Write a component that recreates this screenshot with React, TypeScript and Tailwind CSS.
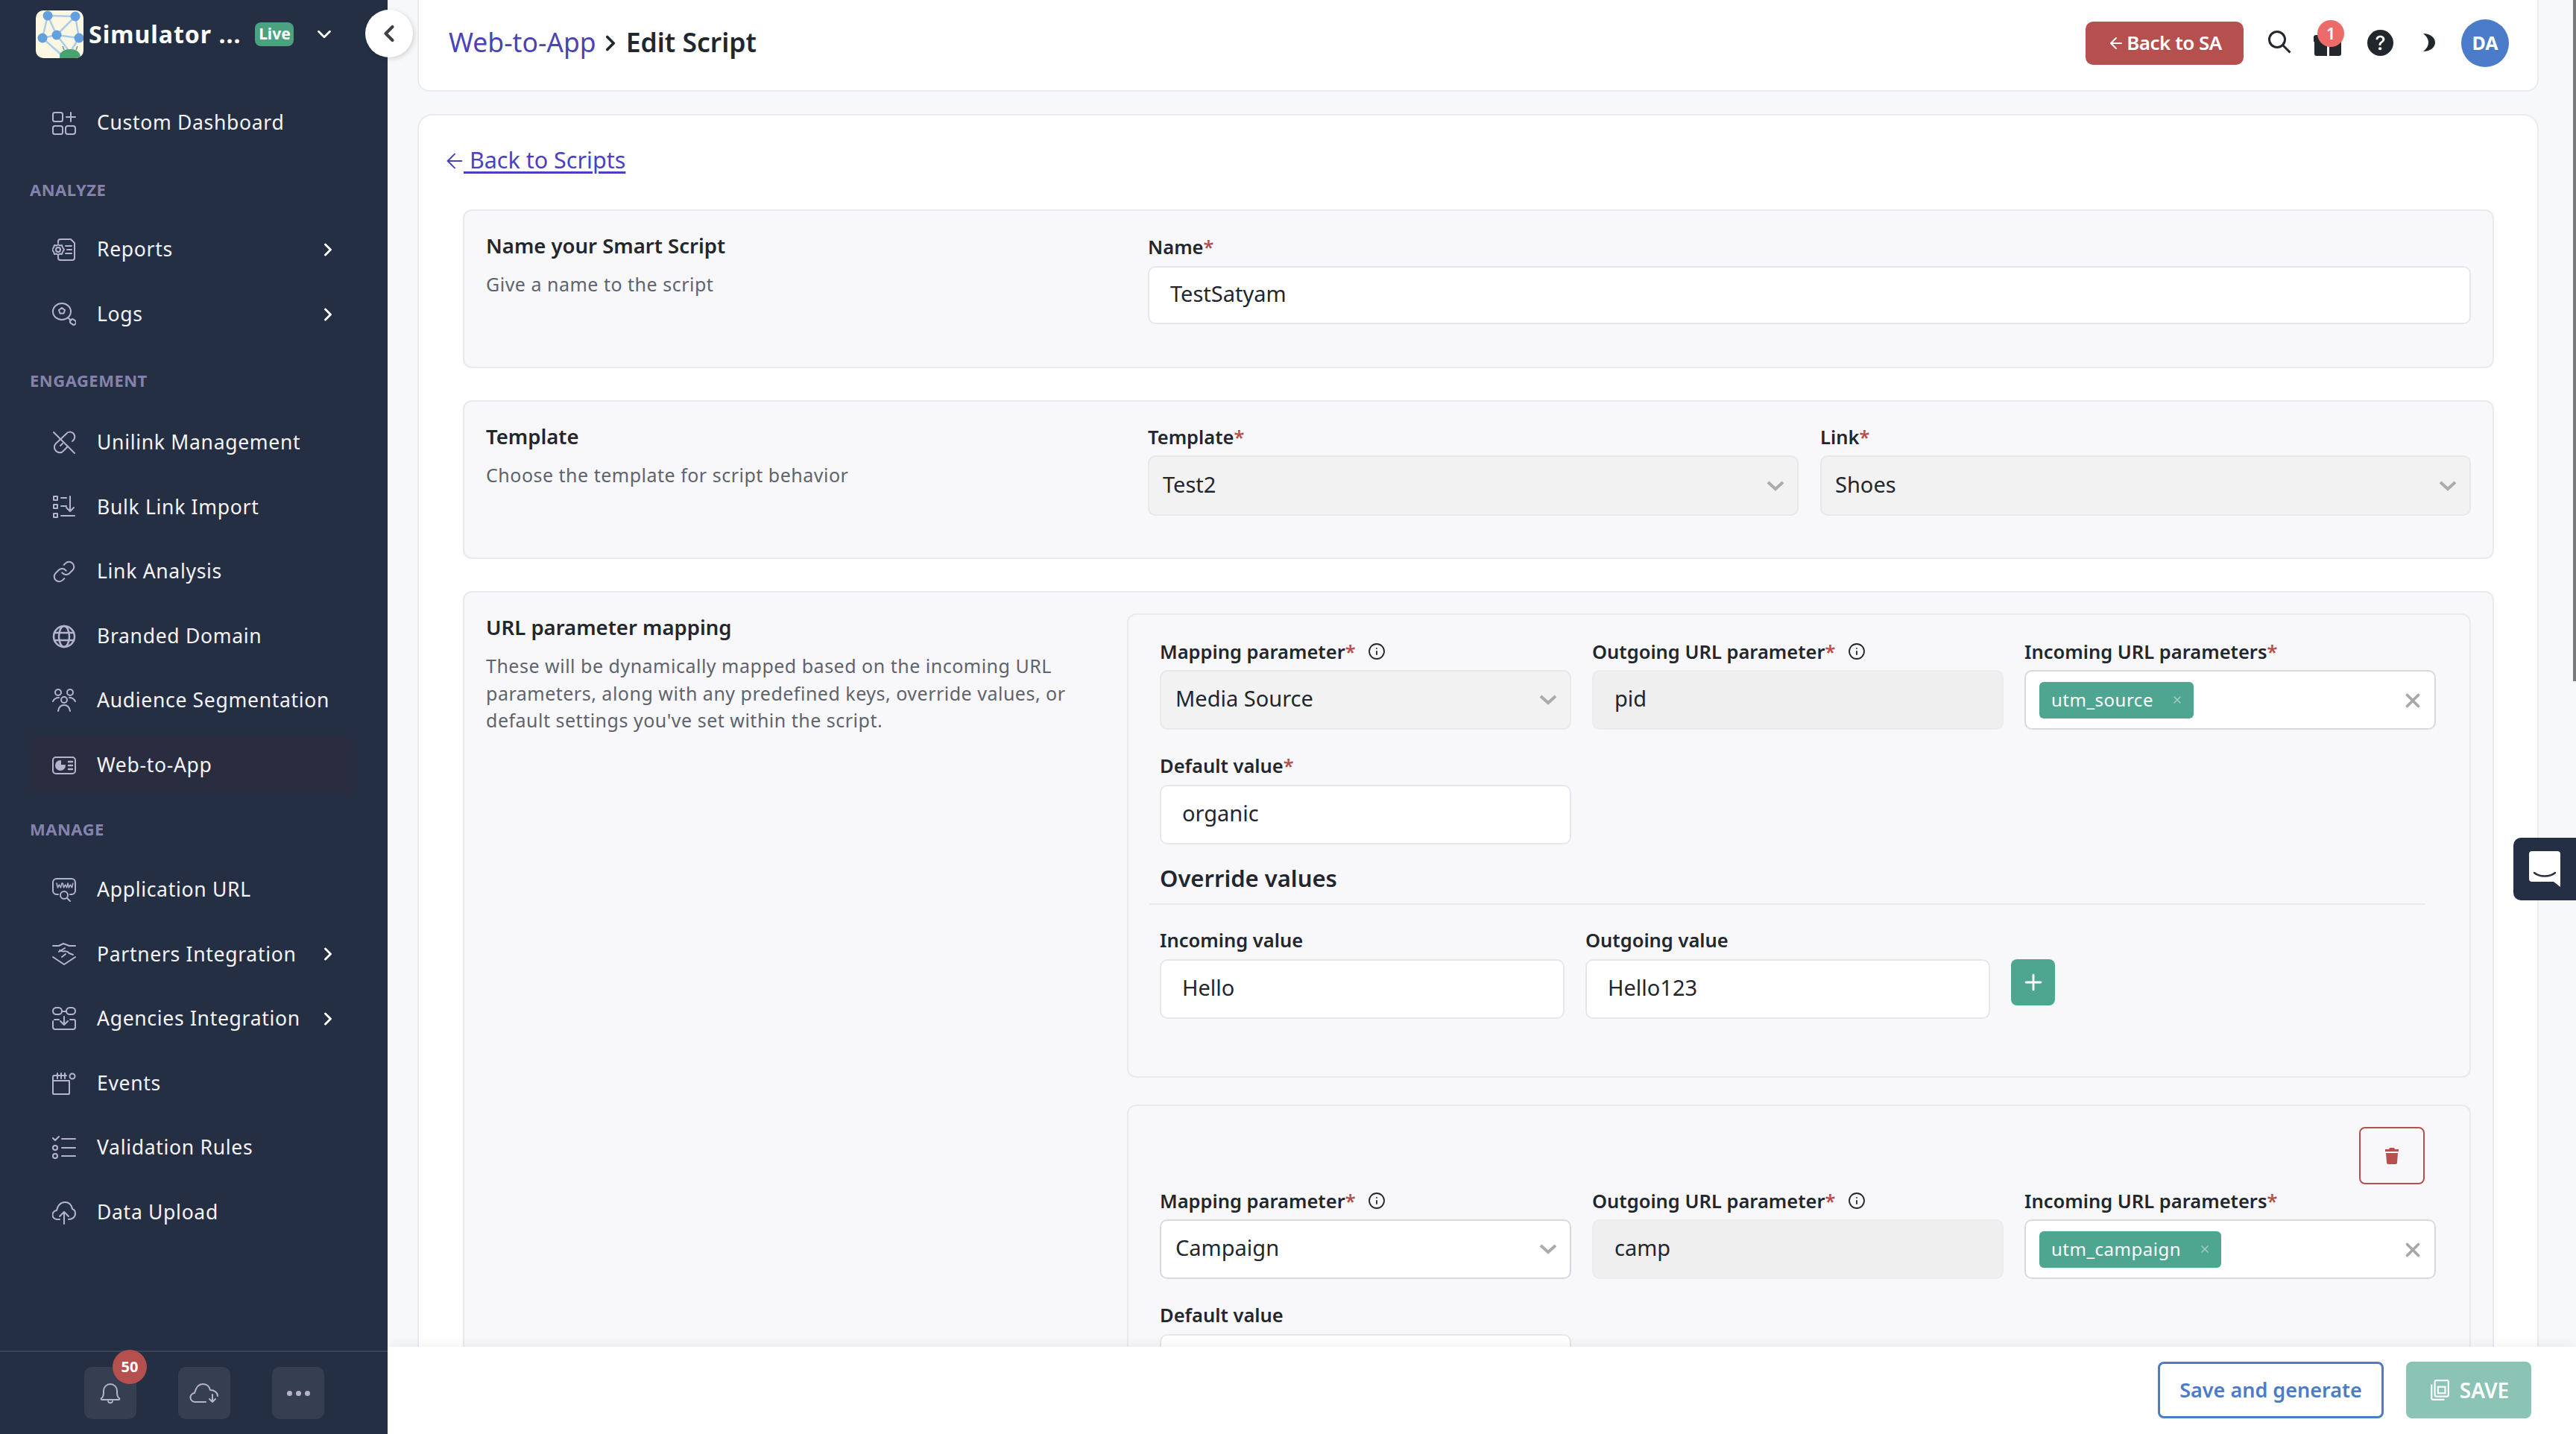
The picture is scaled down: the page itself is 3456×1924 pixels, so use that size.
import React from "react";
import { ChevronDown, ChevronRight, ChevronLeft, ArrowLeft, Info, X, Plus } from "lucide-react";
import { BsQuestionCircleFill } from "react-icons/bs";

const S = { fill: "none", stroke: "currentColor", strokeWidth: 2, strokeLinecap: "round", strokeLinejoin: "round" } as const;

const icons: Record<string, React.ReactNode> = {
  dash: <g {...S}><rect x="1" y="2" width="13" height="12" rx="2.5" /><path d="M19 8h12M25 2v12" /><rect x="1" y="20" width="13" height="11" rx="2.5" /><rect x="18" y="20" width="13" height="11" rx="3" /></g>,
  reports: <g {...S}><path d="M8 7V5a3 3 0 0 1 3-3h14l5 5v20a3 3 0 0 1-3 3H11a3 3 0 0 1-3-3v-3" /><circle cx="8" cy="16" r="3" /><path d="M8 9l2 1.500 3-.5 1 3 2 3-2 3-1 3-3-.5-2 1.500-2-1.500-3 .5-1-3-2-3 2-3 1-3 3 .5z" /><path d="M18 11h8M20 16h6M18 21h8" /></g>,
  logs: <g {...S}><ellipse cx="13" cy="12" rx="12" ry="11" /><path d="M13 7l4 3-1.500 4.500h-5L9 10z" /><path d="M22 21l3 3" /><rect x="24" y="23" width="8" height="6" rx="2.500" transform="rotate(35 28 26)" /></g>,
  unilink: <g {...S}><path d="M2 2l28 28" /><path d="M27 14a7 7 0 0 0 1-11c-3-2-7-2-9 1L5 17a7 7 0 0 0 0 10c3 3 8 3 10 0l6-6" /><path d="M11 20l3-3" /></g>,
  bulk: <g {...S}><rect x="2" y="2" width="5" height="5" /><rect x="2" y="13" width="5" height="5" /><rect x="2" y="25" width="5" height="5" /><path d="M12 4h7M12 15h7M12 28h18M24 2v20M19 17l5 5 5-5" /></g>,
  link: <g {...S} strokeWidth={1.500} transform="scale(1.333)"><path d="M10 13a5 5 0 0 0 7.540.540l3-3a5 5 0 0 0-7.070-7.070l-1.720 1.710" /><path d="M14 11a5 5 0 0 0-7.540-.540l-3 3a5 5 0 0 0 7.070 7.070l1.710-1.710" /></g>,
  globe: <g {...S} strokeWidth={2.500}><circle cx="16" cy="16" r="14" /><ellipse cx="16" cy="16" rx="7" ry="14" /><path d="M3 11h26M3 21h26" /></g>,
  people: <g {...S}><circle cx="8" cy="5" r="4" /><circle cx="24" cy="5" r="4" /><circle cx="16" cy="15" r="4" /><path d="M1 17c2-4 5-5 8-5M31 17c-2-4-5-5-8-5M8 30c1-6 4-8 8-8s7 2 8 8" /></g>,
  web: <g {...S}><rect x="1" y="5" width="30" height="22" rx="4" /><path d="M11 10a6 6 0 1 0 6 6h-6z" fill="currentColor" /><path d="M22 11h5M22 16h5M22 21h5M11 10" strokeWidth={2.500} /></g>,
  www: <g {...S}><path d="M8 22H6a5 5 0 0 1-5-5V6a5 5 0 0 1 5-5h20a5 5 0 0 1 5 5v11a5 5 0 0 1-5 5h-2" /><path d="M6 7l1.500 6 2-4 2 4 1.500-6M14 7l1.500 6 2-4 2 4 1.500-6M21 7l1.500 6 2-4 2 4 1.500-6" strokeWidth={1.500} /><circle cx="16" cy="23" r="5" /><path d="M20 27l4 4" /></g>,
  hands: <g {...S}><path d="M1 5h8l6-3 8 3h8" /><path d="M1 20l15 10 15-10" /><path d="M10 11c6 4 8-2 13 4l5 2M13 20l5-4M9 13l8-5" /></g>,
  agency: <g {...S}><rect x="1" y="1" width="12" height="9" rx="4.500" /><rect x="19" y="1" width="12" height="9" rx="4.500" /><path d="M1 19v8a3 3 0 0 0 3 3h24a3 3 0 0 0 3-3v-8a2 2 0 0 0-2-2h-5M9 17H3M16 13v11M11 19l5 5 5-5M13 6h6" /></g>,
  events: <g {...S}><path d="M23 13v16a1 1 0 0 1-1 1H2a1 1 0 0 1-1-1V7a2 2 0 0 1 2-2h16M1 12h22" /><path d="M7 2v7M12 2v7M17 2v7" /><circle cx="27" cy="6" r="3.500" /></g>,
  rules: <g {...S}><path d="M1 3l3 3 5-5" /><circle cx="4" cy="16" r="3" /><circle cx="4" cy="27" r="3" /><path d="M13 4h18M13 16h18M13 27h18" /></g>,
  upload: <g {...S}><path d="M10 25H7a6 6 0 0 1-1-12C7 7 11 2 17 2s9 4 10 9c3 1 4 4 4 6 0 5-4 8-9 8" /><path d="M16 31V15M10 21l6-6 6 6" /></g>,
};

function NavIcon({ name }: { name: string }) {
  return <svg viewBox="0 0 32 32" className="w-[32px] h-[32px] text-[#b4b4cf] shrink-0">{icons[name]}</svg>;
}

function Nav({ icon, label, arrow, active }: { icon: string; label: string; arrow?: boolean; active?: boolean }) {
  return (
    <div className={`flex items-center h-[78px] mb-[8.6px] ml-[40px] mr-[42px] pl-[30px] rounded-[12px] ${active ? "bg-[#2a2d40]" : ""}`}>
      <NavIcon name={icon} />
      <span className="ml-[28px] text-[26.500px] tracking-[0.7px] text-[#f4f4f8] whitespace-nowrap">{label}</span>
      {arrow && <ChevronRight className="absolute left-[426px] text-white" size={28} strokeWidth={2.500} />}
    </div>
  );
}

function Section({ label, h }: { label: string; h: string }) {
  return <div className={`flex items-center pl-[40px] text-[22px] font-bold tracking-[0.5px] text-[#8583ad] ${h}`}>{label}</div>;
}

function Sidebar() {
  return (
    <aside className="w-[520px] shrink-0 h-full bg-[#252f44] flex flex-col relative">
      <div className="h-[92px] flex items-center pl-[48px] shrink-0">
        <svg viewBox="0 0 64 64" className="w-[64px] h-[64px] rounded-[10px] shrink-0">
          <rect width="64" height="64" fill="#fbf7e3" />
          <g stroke="#a9cdea" strokeWidth="2.500">
            <path d="M16 7L53 8M16 7L9 37M16 7L28 33M53 8L28 33M53 8L58 37M9 37L28 33M28 33L58 37M9 37L36 61M28 33L46 56M58 37L46 56" />
          </g>
          <g fill="#639fdc">
            <circle cx="16" cy="7" r="6.500" /><circle cx="53" cy="8" r="6.500" /><circle cx="9" cy="37" r="6.500" /><circle cx="28" cy="33" r="6.500" /><circle cx="58" cy="37" r="6.500" /><circle cx="36" cy="60" r="4" />
          </g>
          <path d="M32 64c0-9 6-12 14-12s14 3 14 12z" fill="#4aa36f" />
          <path d="M38 53l-2-5M54 53l2-5" stroke="#4aa36f" strokeWidth="1.500" />
        </svg>
        <span className="ml-[7px] text-[32px] leading-none font-bold tracking-[1px] text-white whitespace-nowrap">Simulator ...</span>
        <span className="ml-[19px] w-[52px] h-[32px] rounded-[8px] bg-[#4ba27f] text-white text-[21px] font-bold flex items-center justify-center">Live</span>
        <ChevronDown className="ml-[26px] text-white" size={30} strokeWidth={2.200} />
      </div>
      <nav className="flex-1 pt-[34px] relative">
        <Nav icon="dash" label="Custom Dashboard" />
        <Section label="ANALYZE" h="h-[83.500px]" />
        <Nav icon="reports" label="Reports" arrow />
        <Nav icon="logs" label="Logs" arrow />
        <Section label="ENGAGEMENT" h="h-[85.500px] pb-[4px]" />
        <Nav icon="unilink" label="Unilink Management" />
        <Nav icon="bulk" label="Bulk Link Import" />
        <Nav icon="link" label="Link Analysis" />
        <Nav icon="globe" label="Branded Domain" />
        <Nav icon="people" label="Audience Segmentation" />
        <Nav icon="web" label="Web-to-App" active />
        <Section label="MANAGE" h="h-[80.500px] pb-[4px]" />
        <Nav icon="www" label="Application URL" />
        <Nav icon="hands" label="Partners Integration" arrow />
        <Nav icon="agency" label="Agencies Integration" arrow />
        <Nav icon="events" label="Events" />
        <Nav icon="rules" label="Validation Rules" />
        <Nav icon="upload" label="Data Upload" />
      </nav>
      <div className="h-[112px] shrink-0 border-t-2 border-[#3a4459] flex items-start justify-start pl-[113px] pt-[20px] gap-[56px] relative">
        <div className="w-[70px] h-[70px] rounded-[10px] bg-[#363e52] flex items-center justify-center relative text-[#b4b4cf]">
          <svg viewBox="0 0 28 30" className="w-[28px] h-[30px]" {...S}><path d="M2 22c3-2 3-5 3-10a9 9 0 0 1 18 0c0 5 0 8 3 10 1 1 0 2-1 2H3c-1 0-2-1-1-2zM11 26c1 3 5 3 6 0" /></svg>
          <span className="absolute left-[38px] top-[-23px] w-[46px] h-[46px] rounded-full bg-[#b5504e] text-white text-[20px] font-bold flex items-center justify-center">50</span>
        </div>
        <div className="w-[70px] h-[70px] rounded-[10px] bg-[#363e52] flex items-center justify-center text-[#b4b4cf]">
          <svg viewBox="0 0 40 28" className="w-[40px] h-[28px]" {...S}><path d="M22 26H8a6 6 0 0 1-1-12C9 6 13 2 18 2c5 0 9 3 10 8 5 0 10 3 10 8" /><path d="M31 16v10M27 22l4 4 4-4" /></svg>
        </div>
        <div className="w-[70px] h-[70px] rounded-[10px] bg-[#363e52] flex items-center justify-center gap-[5px]">
          <span className="w-[7px] h-[7px] rounded-full bg-[#b4b4cf]" />
          <span className="w-[7px] h-[7px] rounded-full bg-[#b4b4cf]" />
          <span className="w-[7px] h-[7px] rounded-full bg-[#b4b4cf]" />
        </div>
      </div>
      <button className="absolute left-[490px] top-[13px] w-[64px] h-[64px] rounded-full bg-white shadow-[2px_2px_6px_rgba(0,0,0,0.15)] flex items-center justify-center text-[#3f3f46] z-20">
        <ChevronLeft size={36} strokeWidth={2.800} />
      </button>
    </aside>
  );
}

function Req() {
  return <span className="text-[#b5504e]">*</span>;
}

function Label({ text, req, info, className = "" }: { text: string; req?: boolean; info?: boolean; className?: string }) {
  return (
    <div className={`h-[36px] pb-[2px] flex items-center text-[25.500px] font-semibold text-[#22262d] whitespace-nowrap ${className}`}>
      {text}{req && <Req />}
      {info && <Info size={24} strokeWidth={1.800} className="ml-[16px]" />}
    </div>
  );
}

function Field({ value, kind, pad = "pl-[28px]", h = "h-[80px]" }: { value: string; kind: "input" | "grey" | "select" | "selectWhite"; pad?: string; h?: string }) {
  const cls =
    kind === "input" ? "bg-white border-[#e6e6ec]" :
    kind === "grey" ? "bg-[#efeff0] border-[#ececf0]" :
    kind === "select" ? "bg-[#f2f2f3] border-[#e8e8ec]" :
    "bg-white border-[#d8d8de]";
  return (
    <div className={`${h} rounded-[10px] border-2 ${cls} flex items-center ${pad} text-[#22262d] text-[29px] relative`}>
      <span className="pb-[4px]">{value}</span>
      {(kind === "select" || kind === "selectWhite") && (
        <svg viewBox="0 0 24 14" className="absolute right-[17px] top-1/2 -translate-y-1/2 w-[24px] h-[14px]">
          <path d="M2 2l10 9 10-9" fill="none" stroke="#ababab" strokeWidth="4" />
        </svg>
      )}
    </div>
  );
}

function Chips({ chip }: { chip: string }) {
  return (
    <div className="h-[80px] rounded-[10px] border-2 border-[#d8d8de] bg-white flex items-center pl-[18px] relative">
      <span className="h-[49px] rounded-[6px] bg-[#4ea690] text-white text-[24px] flex items-center pl-[16px] pr-[14px] gap-[24px] tracking-[0.5px]">
        {chip}
        <X size={16} strokeWidth={2} className="text-[#a9cdc2]" />
      </span>
      <X size={30} strokeWidth={3} className="absolute right-[14px] top-[24px] text-[#a8a8a8]" />
    </div>
  );
}

const cols = "grid grid-cols-[552px_552px_552px] gap-x-[28px]";

function Main() {
  return (
    <main className="flex-1 min-w-0 h-full bg-[#f7f8fa] pl-[40px] pr-[50px] flex flex-col relative overflow-hidden">
      <header className="h-[123px] shrink-0 bg-white border-2 border-t-0 border-[#e9ebf0] rounded-b-[16px] flex items-center pl-[40px] pr-[38px]">
        <span className="text-[35.500px] text-[#4a43b5] pb-[8px]">Web-to-App</span>
        <ChevronRight size={34} strokeWidth={2.600} className="ml-[2px] text-[#22262d] mb-[6px]" />
        <span className="ml-[4px] text-[35.500px] font-semibold text-[#22262d] pb-[8px]">Edit Script</span>
        <div className="ml-auto flex items-center pb-[6px]">
          <button className="w-[212px] h-[58px] rounded-[10px] bg-[#b5504e] text-white text-[26px] font-semibold flex items-center justify-center gap-[2px] tracking-[-0.5px]">
            <ArrowLeft size={24} strokeWidth={2} />Back to SA
          </button>
          <svg viewBox="0 0 31 31" className="ml-[33px] w-[31px] h-[31px] mb-[3px] text-[#22262d]" fill="none" stroke="currentColor" strokeWidth="3"><circle cx="12" cy="12" r="10.500" /><path d="M19.500 19.500l10 10" /></svg>
          <div className="ml-[30px] w-[37px] h-[28px] relative mt-[6px]">
            <div className="absolute left-[1px] top-[9px] w-[36px] h-[19px] bg-[#22262d] rounded-b-[3px] flex justify-center"><span className="w-[3px] h-full bg-white" /></div>
            <div className="absolute left-0 top-0 w-[37px] h-[9px] bg-[#22262d] rounded-t-[3px]" />
            <span className="absolute left-[5px] top-[-20px] w-[36px] h-[36px] rounded-full bg-[#ec6a67] text-white text-[22px] font-semibold flex items-center justify-center">1</span>
          </div>
          <BsQuestionCircleFill size={35} className="ml-[35px] text-[#22262d]" />
          <svg viewBox="0 0 16 24" className="ml-[40px] w-[16px] h-[24px] mb-[2px] text-[#22262d]"><path fill="currentColor" d="M0 0C10 0 16 6 16 12S10 24 0 24C5 20 7 16 7 12S5 4 0 0z" /></svg>
          <span className="ml-[35px] w-[64px] h-[64px] rounded-full bg-[#4a7cc9] text-white text-[25px] font-bold flex items-center justify-center">DA</span>
        </div>
      </header>

      <div className="mt-[30px] flex-1 min-h-0 bg-white border-2 border-[#e9ebf0] rounded-[20px] pl-[59px] pr-[58px] overflow-hidden">
        <div className="h-[126px] flex items-center relative">
          <ArrowLeft size={32} strokeWidth={1.500} className="absolute left-[-27px] top-[45px] text-[#4a43b5]" />
          <span className="text-[#4b3fc4] text-[30.500px] underline pb-[6px] underline-offset-[4px] whitespace-pre ml-[1px]"> Back to Scripts</span>
        </div>

        <section className="h-[213px] flex bg-[#f8f8fb] border-2 border-[#e9e9ef] rounded-[12px] pl-[29px] pr-[29px]">
          <div className="w-[888px] shrink-0 pt-[27px]">
            <div className="text-[27.500px] font-semibold text-[#22262d] h-[40px] flex items-center">Name your Smart Script</div>
            <div className="mt-[14px] text-[25px] text-[#5f636b] h-[36px] flex items-center tracking-[0.5px]">Give a name to the script</div>
          </div>
          <div className="flex-1 pt-[31px]">
            <Label text="Name" req />
            <div className="mt-[7px]"><Field value="TestSatyam" kind="input" h="h-[78px]" /></div>
          </div>
        </section>

        <section className="mt-[43px] h-[213px] flex bg-[#f8f8fb] border-2 border-[#e9e9ef] rounded-[12px] pl-[29px] pr-[29px]">
          <div className="w-[888px] shrink-0 pt-[27px]">
            <div className="text-[27.500px] font-semibold text-[#22262d] h-[40px] flex items-center">Template</div>
            <div className="mt-[14px] text-[25px] text-[#5f636b] h-[36px] flex items-center tracking-[0.5px]">Choose the template for script behavior</div>
          </div>
          <div className="flex-1 pt-[30px] grid grid-cols-2 gap-x-[29px]">
            <div>
              <Label text="Template" req />
              <div className="mt-[6px]"><Field value="Test2" kind="select" pad="pl-[18px]" h="h-[81px]" /></div>
            </div>
            <div>
              <Label text="Link" req />
              <div className="mt-[6px]"><Field value="Shoes" kind="select" pad="pl-[18px]" h="h-[81px]" /></div>
            </div>
          </div>
        </section>

        <section className="mt-[43px] flex bg-[#f8f8fb] border-2 border-[#e9e9ef] rounded-[12px] pl-[29px] pr-[29px] pb-[40px]">
          <div className="w-[860px] shrink-0 pt-[27px]">
            <div className="text-[27.500px] font-semibold text-[#22262d] h-[40px] flex items-center">URL parameter mapping</div>
            <p className="mt-[13px] text-[25px] leading-[36.500px] text-[#5f636b] tracking-[0.5px] whitespace-nowrap">
              These will be dynamically mapped based on the incoming URL<br />
              parameters, along with any predefined keys, override values, or<br />
              default settings you've set within the script.
            </p>
          </div>
          <div className="flex-1 min-w-0 pt-[28px]">
            <div className="h-[623px] border-2 border-[#e9e9ef] rounded-[12px] pl-[42px] pt-[32px]">
              <div className={cols}>
                <div><Label text="Mapping parameter" req info /><div className="mt-[6px]"><Field value="Media Source" kind="select" pad="pl-[19px]" /></div></div>
                <div><Label text="Outgoing URL parameter" req info /><div className="mt-[6px]"><Field value="pid" kind="grey" /></div></div>
                <div><Label text="Incoming URL parameters" req /><div className="mt-[6px]"><Chips chip="utm_source" /></div></div>
              </div>
              <Label text="Default value" req className="mt-[31px]" />
              <div className="mt-[7px] w-[552px]"><Field value="organic" kind="input" /></div>
              <div className="mt-[23px] h-[44px] flex items-center text-[31px] font-semibold text-[#22262d]">Override values</div>
              <div className="mt-[12px] ml-[-14px] w-[1712px] border-t-2 border-[#e9e9ef]" />
              <div className="mt-[30px] flex gap-[28px]">
                <div className="w-[543px]"><Label text="Incoming value" /><div className="mt-[7px]"><Field value="Hello" kind="input" /></div></div>
                <div className="w-[543px]"><Label text="Outgoing value" /><div className="mt-[7px]"><Field value="Hello123" kind="input" /></div></div>
                <button className="mt-[43px] w-[59px] h-[62px] rounded-[8px] bg-[#4ea690] text-white flex items-center justify-center"><Plus size={34} strokeWidth={2} /></button>
              </div>
            </div>
            <div className="mt-[36px] h-[700px] border-2 border-[#e9e9ef] rounded-[12px] pl-[42px] pt-[28px] flex flex-col">
              <button className="self-end mr-[60px] w-[88px] h-[77px] rounded-[8px] border-2 border-[#b5504e] flex items-center justify-center">
                <svg viewBox="0 0 18 22" className="w-[18px] h-[22px]"><path fill="#b5504e" d="M6 0h6l1 2h5v3H0V2h5zM1 7h16l-1 13a2 2 0 0 1-2 2H4a2 2 0 0 1-2-2z" /></svg>
              </button>
              <div className={`${cols} mt-[5px]`}>
                <div><Label text="Mapping parameter" req info /><div className="mt-[6px]"><Field value="Campaign" kind="selectWhite" pad="pl-[19px]" /></div></div>
                <div><Label text="Outgoing URL parameter" req info /><div className="mt-[6px]"><Field value="camp" kind="grey" /></div></div>
                <div><Label text="Incoming URL parameters" req /><div className="mt-[6px]"><Chips chip="utm_campaign" /></div></div>
              </div>
              <Label text="Default value" className="mt-[31px]" />
              <div className="mt-[7px] w-[552px]"><Field value="" kind="input" /></div>
            </div>
          </div>
        </section>
      </div>

      <footer className="absolute left-0 right-0 bottom-0 h-[117px] bg-white shadow-[0_-4px_14px_rgba(0,0,0,0.05)] flex items-start justify-end pt-[20px] pr-[60px] gap-[30px] z-10">
        <button className="w-[303px] h-[76px] rounded-[8px] border-[3px] border-[#4a7cc9] bg-white text-[#4a7cc9] text-[27px] font-semibold">Save and generate</button>
        <button className="w-[168px] h-[76px] rounded-[8px] bg-[#8bc3b4] text-white text-[28px] font-semibold flex items-center justify-center gap-[12px]">
          <svg viewBox="0 0 26 28" className="w-[30px] h-[30px]" fill="none" stroke="currentColor" strokeWidth="2"><rect x="7" y="2" width="17" height="20" rx="2" /><path d="M3 7v17a2 2 0 0 0 2 2h14" /><rect x="11" y="10" width="9" height="8" /></svg>
          SAVE
        </button>
      </footer>

      <div className="absolute right-0 top-[1124px] w-[84px] h-[84px] bg-[#252f44] rounded-l-[10px] flex items-center justify-center z-20">
        <svg viewBox="0 0 42 48" className="w-[42px] h-[48px]"><path fill="#fff" d="M4 0h34a4 4 0 0 1 4 4v44l-9-7H4a4 4 0 0 1-4-4V4a4 4 0 0 1 4-4z" /><path d="M7 29c7 6 21 6 28 0" fill="none" stroke="#252f44" strokeWidth="2.500" strokeLinecap="round" /></svg>
      </div>
      <div className="absolute right-0 top-0 w-[4px] h-[914px] bg-[#777b80]" />
    </main>
  );
}

export default function App() {
  return (
    <div className="w-full h-[1924px] flex overflow-hidden font-['Noto_Sans',sans-serif]">
      <Sidebar />
      <Main />
    </div>
  );
}
